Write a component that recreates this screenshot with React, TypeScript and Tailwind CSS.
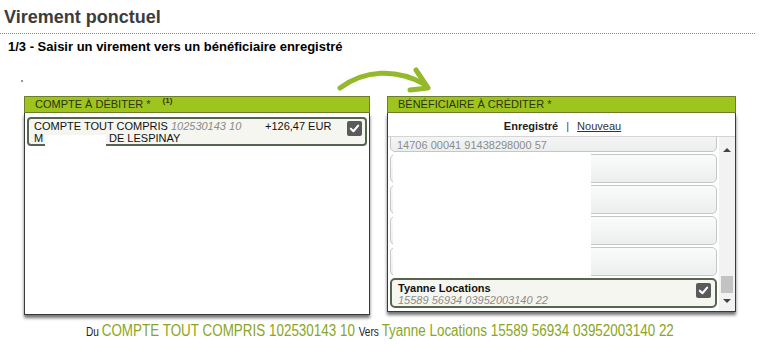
import React from "react";

const Check = () => (
  <div className="flex h-[15px] w-[15px] items-center justify-center rounded-[2px] bg-[#5a5a5a]">
    <svg viewBox="0 0 12 12" className="h-[11px] w-[11px]">
      <path d="M2 6.2 L4.8 9 L10 2.8" fill="none" stroke="#fff" strokeWidth="2.2" strokeLinecap="round" strokeLinejoin="round" />
    </svg>
  </div>
);

const beneficiaries = [
  { name: "", iban: "14706 00041 91438298000 57" },
  { name: "", iban: "" },
  { name: "", iban: "" },
  { name: "", iban: "" },
  { name: "", iban: "" },
];

export default function App() {
  return (
    <div className="relative h-[344px] w-[760px] overflow-hidden bg-white font-['Liberation_Sans',Arial,sans-serif] text-[#222]">
      <h1 className="px-[4px] pt-[6px] text-[18px] font-bold leading-[22px] text-[#3c3c3c]">Virement ponctuel</h1>
      <div className="mt-[5px] mr-[5px] border-t border-dotted border-[#8a8a8a]" />
      <p className="mt-[5px] px-[8px] text-[13px] font-bold leading-[15px] text-black">
        1/3 - Saisir un virement vers un bénéficiaire enregistré
      </p>

      <div className="ml-[21px] mt-[26px] h-[2px] w-[2px] bg-[#999]" />

      {/* curved arrow */}
      <svg className="absolute left-[334px] top-[64px] h-[34px] w-[104px]" viewBox="0 0 104 34">
        <path d="M6 24 C 30 6, 62 4, 90 20" fill="none" stroke="#94b92b" strokeWidth="5" strokeLinecap="round" />
        <path d="M82 6 L94 24 L76 26" fill="none" stroke="#94b92b" strokeWidth="5" strokeLinecap="round" strokeLinejoin="round" />
      </svg>

      <div className="mt-[14px] flex items-start pl-[24px]">
        {/* left panel */}
        <div className="w-[346px]">
          <div className="flex h-[17px] items-center border border-[#6d7d2c] bg-[#9ec41e] px-[10px] text-[11px] leading-none text-[#2e3314]">
            COMPTE À DÉBITER *
            <sup className="ml-[12px] text-[8px] font-bold">(1)</sup>
          </div>
          <div className="relative h-[202px] border-x border-b border-[#3a3a3a] bg-white px-[2px] pt-[4px] shadow-[0_3px_3px_rgba(0,0,0,0.55)]">
            <div className="flex h-[29px] items-start rounded-[4px] border-2 border-[#57644f] bg-[#f6f6f0] pl-[5px] pr-[3px] pt-[1px] text-[11px] leading-[12px]">
              <div className="w-[231px]">
                <div className="whitespace-nowrap text-[#111]">
                  COMPTE TOUT COMPRIS <span className="italic text-[#8a8a8a]">102530143 10</span>
                </div>
                <div className="flex whitespace-nowrap text-[#111]">
                  <span className="w-[75px]">M</span>
                  <span>DE LESPINAY</span>
                </div>
              </div>
              <div className="flex-1 whitespace-nowrap text-[#111]">+126,47 EUR</div>
              <div className="pt-[1px]">
                <Check />
              </div>
            </div>
            <div className="absolute left-[20px] top-[22px] h-[12px] w-[61px] bg-white" />
          </div>
        </div>

        {/* right panel */}
        <div className="ml-[17px] w-[349px]">
          <div className="flex h-[17px] items-center border border-[#6d7d2c] bg-[#9ec41e] px-[10px] text-[11px] leading-none text-[#2e3314]">
            BÉNÉFICIAIRE À CRÉDITER *
          </div>
          <div className="border-x border-b border-[#3a3a3a] bg-white shadow-[0_3px_3px_rgba(0,0,0,0.55)]">
            <div className="flex h-[23px] items-center justify-center pl-[2px] pt-[3px] text-[11px] leading-none">
              <span className="font-bold text-[#222]">Enregistré</span>
              <span className="mx-[8px] text-[#444]">|</span>
              <span className="text-[#333] underline">Nouveau</span>
            </div>
            <div className="relative flex h-[175px] overflow-hidden border-t border-[#d4d4d4]">
              <div className="flex flex-1 flex-col gap-[2px] overflow-hidden px-[2px]">
                {beneficiaries.map((b, i) => (
                  <div
                    key={i}
                    className={`h-[29px] shrink-0 rounded-[5px] border border-[#c3c7c7] bg-gradient-to-b from-[#fbfbfb] to-[#eceeee] px-[6px] pt-[3px] text-[11px] leading-[12px] ${i === 0 ? "-mt-[14px]" : ""}`}
                  >
                    <div className="h-[12px] font-bold">{b.name}</div>
                    <div className="text-[#8c8c8c]">{b.iban}</div>
                  </div>
                ))}
                <div className="flex h-[30px] shrink-0 items-start rounded-[5px] border-2 border-[#57644f] bg-[#f6f6f0] pl-[6px] pr-[4px] pt-[2px] text-[11px] leading-[12px]">
                  <div className="flex-1">
                    <div className="font-bold text-[#111]">Tyanne Locations</div>
                    <div className="italic text-[#8c8c8c]">15589 56934 03952003140 22</div>
                  </div>
                  <div className="pt-[1px]">
                    <Check />
                  </div>
                </div>
              </div>
              <div className="relative w-[16px] bg-[#f2f2f2]">
                <div className="absolute left-[4px] top-[11px] h-0 w-0 border-x-[4px] border-b-[4px] border-x-transparent border-b-[#444]" />
                <div className="absolute left-[2px] top-[139px] h-[17px] w-[12px] bg-[#c3c3c3]" />
                <div className="absolute left-[4px] top-[162px] h-0 w-0 border-x-[4px] border-t-[4px] border-x-transparent border-t-[#444]" />
              </div>
              <div className="absolute left-[5px] top-[15px] h-[125px] w-[198px] bg-white" />
            </div>
          </div>
        </div>
      </div>

      <div className="absolute inset-x-0 top-[322px] flex justify-center">
        <div className="origin-center scale-x-[0.84] whitespace-nowrap leading-[18px]">
          <span className="text-[12px] text-[#222]">Du </span>
          <span className="text-[16px] text-[#8aa524]">COMPTE TOUT COMPRIS 102530143 10 </span>
          <span className="text-[12px] text-[#222]">Vers </span>
          <span className="text-[16px] text-[#8aa524]">Tyanne Locations 15589 56934 03952003140 22</span>
        </div>
      </div>
    </div>
  );
}
